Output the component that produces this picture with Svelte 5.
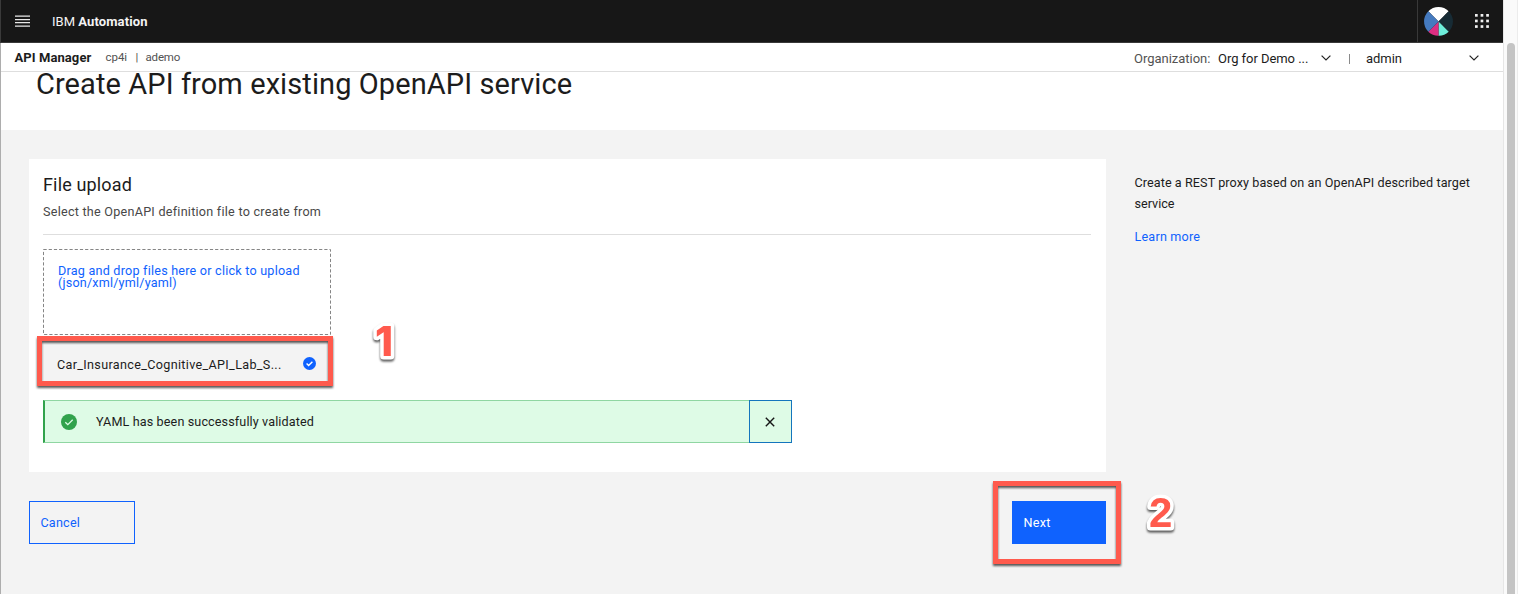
<script>
  const dots = [0, 5.6, 11.2];
</script>

<div class="app">
  <div class="page">
    <header class="topbar">
      <svg class="menu" width="15" height="12" viewBox="0 0 15 12">
        <path d="M0 1h15M0 4.5h15M0 7.5h15M0 11h15" stroke="#e8e8e8" stroke-width="1.25" />
      </svg>
      <span class="brand">IBM <b>Automation</b></span>
      <div class="account">
        <svg width="29" height="29" viewBox="-14.5 -14.5 29 29">
          <path d="M0 0L-10.2-10.2A14.4 14.4 0 0 1 10.2-10.2Z" fill="#fff" />
          <path d="M0 0L10.2-10.2A14.4 14.4 0 0 1 10.2 10.2Z" fill="#172b35" />
          <path d="M0 0L10.2 10.2A14.2 14.2 0 0 1 0 14.2Z" fill="#6eeedb" />
          <path d="M0 0L0 14.2A14.2 14.2 0 0 1-10.2 10.2Z" fill="#dc2e82" />
          <path d="M0 0L-10.2 10.2A14.4 14.4 0 0 1-10.2-10.2Z" fill="#457abf" />
        </svg>
      </div>
      <svg class="switcher" width="14" height="14" viewBox="0 0 14 14">
        {#each dots as y}
          {#each dots as x}
            <rect {x} {y} width="2.7" height="2.7" fill="#f0f0f0" />
          {/each}
        {/each}
      </svg>
    </header>

    <div class="subbar">
      <b class="product">API Manager</b>
      <span class="crumb cp">cp4i</span>
      <span class="crumb bar">|</span>
      <span class="crumb ad">ademo</span>
      <span class="orglabel">Organization:</span>
      <span class="org">Org for Demo ...</span>
      <svg width="10" height="6" viewBox="0 0 10 6"><path d="M.6.6L5 5L9.4.6" fill="none" stroke="#222" stroke-width="1.2" /></svg>
      <span class="pipe"></span>
      <span class="user">admin</span>
      <svg width="10" height="6" viewBox="0 0 10 6"><path d="M.6.6L5 5L9.4.6" fill="none" stroke="#222" stroke-width="1.2" /></svg>
    </div>

    <div class="titlebar"><h1>Create API from existing OpenAPI service</h1></div>

    <main>
      <div class="left">
        <section class="card">
          <h2>File upload</h2>
          <p class="hint">Select the OpenAPI definition file to create from</p>
          <div class="drop">
            <svg class="dash" width="288" height="86"><rect x=".5" y=".5" width="287" height="85" fill="none" stroke="#858585" stroke-dasharray="3.2 2" /></svg>
            <span class="d1">Drag and drop files here or click to upload</span>
            <span class="d2">(json/xml/yml/yaml)</span>
          </div>
          <div class="file">
            <span>Car_Insurance_Cognitive_API_Lab_S...</span>
            <svg width="13" height="13" viewBox="0 0 13 13"><circle cx="6.5" cy="6.5" r="6.5" fill="#0f62fe" /><path d="M3.6 6.5L5.6 8.5L9.4 4.7" fill="none" stroke="#fff" stroke-width="1.4" /></svg>
            <div class="mark markfile"></div>
            <svg class="digit one" width="40" height="50"><text x="31" y="40" text-anchor="end">1</text></svg>
          </div>
          <div class="notice">
            <svg class="ok" width="16" height="16" viewBox="0 0 16 16"><circle cx="8" cy="8" r="8" fill="#31a24c" /><path d="M4.3 8.2L6.8 10.7L11.7 5.8" fill="none" stroke="#defbe6" stroke-width="1.3" /></svg>
            <span>YAML has been successfully validated</span>
            <button class="close" aria-label="Close"><svg width="10" height="10" viewBox="0 0 10 10"><path d="M.8.8L9.2 9.2M9.2.8L.8 9.2" stroke="#161616" stroke-width="1.4" /></svg></button>
          </div>
        </section>
        <div class="actions">
          <button class="cancel">Cancel</button>
          <div class="nextwrap">
            <button class="next">Next</button>
            <div class="mark marknext"></div>
            <svg class="digit two" width="40" height="50"><text x="8" y="40">2</text></svg>
          </div>
        </div>
      </div>
      <aside>
        <p><span class="s1">Create a REST proxy based on an OpenAPI described target</span><br />service</p>
        <span class="learn">Learn more</span>
      </aside>
    </main>
  </div>
  <div class="scroll"><div class="thumb"></div></div>
</div>

<style>
  :global(body) { overflow: hidden; }
  .app { display: flex; width: 1518px; height: 594px; overflow: hidden; font: 12.6px Roboto, sans-serif; color: #1c1c1c; background: #f3f3f3; }
  .app * { box-sizing: border-box; }
  .app span { white-space: nowrap; }
  .page { width: 1503px; border-left: 1px solid #adadad; display: flex; flex-direction: column; }
  .topbar { height: 43px; background: #171717; border-bottom: 1px solid #393939; display: flex; align-items: center; padding-left: 13.5px; margin-left: -1px; border-left: 1px solid #3a3a3a; }
  .menu { display: block; }
  .brand { font-size: 13px; color: #f4f4f4; margin-left: 22.5px; line-height: 42px; padding-top: 1px; flex: 1; }
  .brand b { letter-spacing: .12px; }
  .account { width: 66px; height: 42px; border-left: 1px solid #393939; margin-right: -8px; padding: 6.5px 0 0 5.5px; }
  .switcher { margin-right: 14px; }
  .subbar { height: 29px; background: #fff; border-bottom: 1px solid #dedede; display: flex; align-items: center; padding: 1px 24px 0 13.5px; font-size: 13px; }
  .product { width: 91px; letter-spacing: .08px; white-space: nowrap; }
  .crumb { font-size: 11.5px; color: #525252; letter-spacing: -.05px; padding-bottom: 1px; }
  .cp { width: 30px; }
  .bar { width: 10px; }
  .ad { letter-spacing: -.18px; }
  .orglabel { color: #525252; margin-left: auto; width: 84px; letter-spacing: -.02px; padding-top: 1px; }
  .org { width: 103px; letter-spacing: -.05px; padding-top: 1px; }
  .pipe { width: 1px; height: 10px; background: #8a8a8a; margin: 3px 16px 0 18px; }
  .user { width: 103px; letter-spacing: -.03px; padding-top: 1px; }
  .titlebar { height: 58px; background: #fff; padding-left: 35px; }
  h1 { margin: 0; font-size: 29px; font-weight: 400; line-height: 24px; letter-spacing: .09px; white-space: nowrap; }
  main { flex: 1; display: flex; padding: 29px 0 0 28px; }
  .left { width: 1077px; }
  .card { height: 313px; background: #fff; padding: 15px 15px 0 14px; }
  h2 { margin: 0; font-size: 18px; font-weight: 400; line-height: 22px; letter-spacing: .15px; }
  .hint { margin: 0; height: 39px; line-height: 32px; letter-spacing: .25px; color: #484848; border-bottom: 1px solid #dedede; }
  .drop { position: relative; display: flex; flex-direction: column; width: 288px; height: 86px; margin-top: 14px; padding: 16px 15px 15px; color: #0f62fe; line-height: 12.4px; }
  .dash { position: absolute; inset: 0; }
  .d1 { letter-spacing: .22px; }
  .d2 { letter-spacing: .19px; }
  .file { position: relative; width: 288px; height: 49px; margin-top: 1px; background: #f3f3f3; display: flex; align-items: center; justify-content: space-between; padding: 7px 15px 0 14px; letter-spacing: .33px; }
  .file > svg { margin-top: -1px; }
  .notice { width: 749px; height: 43px; margin-top: 15px; background: #defbe6; border: 1px solid #8fd6a2; border-left: 2px solid #31a24c; display: flex; align-items: center; padding-left: 16px; letter-spacing: .12px; }
  .notice span { margin-left: 19px; flex: 1; }
  .close { width: 43px; height: 43px; margin: -1px; border: 1px solid #1475bd; background: none; padding: 0 1px 0 0; display: flex; align-items: center; justify-content: center; }
  .actions { display: flex; justify-content: space-between; margin-top: 29px; }
  .actions button { height: 43px; font: inherit; letter-spacing: .24px; text-align: left; padding: 0 11px; display: block; }
  .actions .cancel { width: 106px; border: 1px solid #0f62fe; color: #0f62fe; background: none; padding-left: 10.4px; }
  .actions .next { width: 94px; border: 0; color: #fff; background: #0f62fe; padding-left: 11.5px; }
  .nextwrap { position: relative; }
  aside { padding: 13px 0 0 28.5px; line-height: 21px; }
  aside p { margin: 0 0 12px; }
  .s1 { letter-spacing: .08px; }
  .learn { color: #0f62fe; letter-spacing: .2px; }
  .scroll { width: 15px; background: #fafafa; border-left: 1px solid #e6e6e6; border-right: 1px solid #ececec; padding: 43px 0 0 3px; }
  .thumb { width: 8px; height: 600px; border-radius: 4px; background: #c4c4c4; }
  .mark { position: absolute; border: 5px solid #ff5a4d; filter: drop-shadow(0 2px 1px rgba(0, 0, 0, .65)); }
  .markfile { left: -6px; top: 0; width: 296px; height: 50px; }
  .marknext { left: -19px; top: -20px; width: 128px; height: 83px; }
  .file > .digit { margin: 0; }
  .digit { position: absolute; overflow: visible; filter: drop-shadow(0 2px 1px rgba(0, 0, 0, .65)); }
  .digit text { font: bold 42px "Liberation Sans", sans-serif; letter-spacing: 0; fill: #ff5a4d; stroke: #fff; stroke-width: 7px; stroke-linejoin: round; paint-order: stroke; }
  .digit.one text { font: 800 41px Inter, sans-serif; }
  .one { left: 319px; top: -20px; }
  .two { left: 129px; top: -14px; }
</style>
